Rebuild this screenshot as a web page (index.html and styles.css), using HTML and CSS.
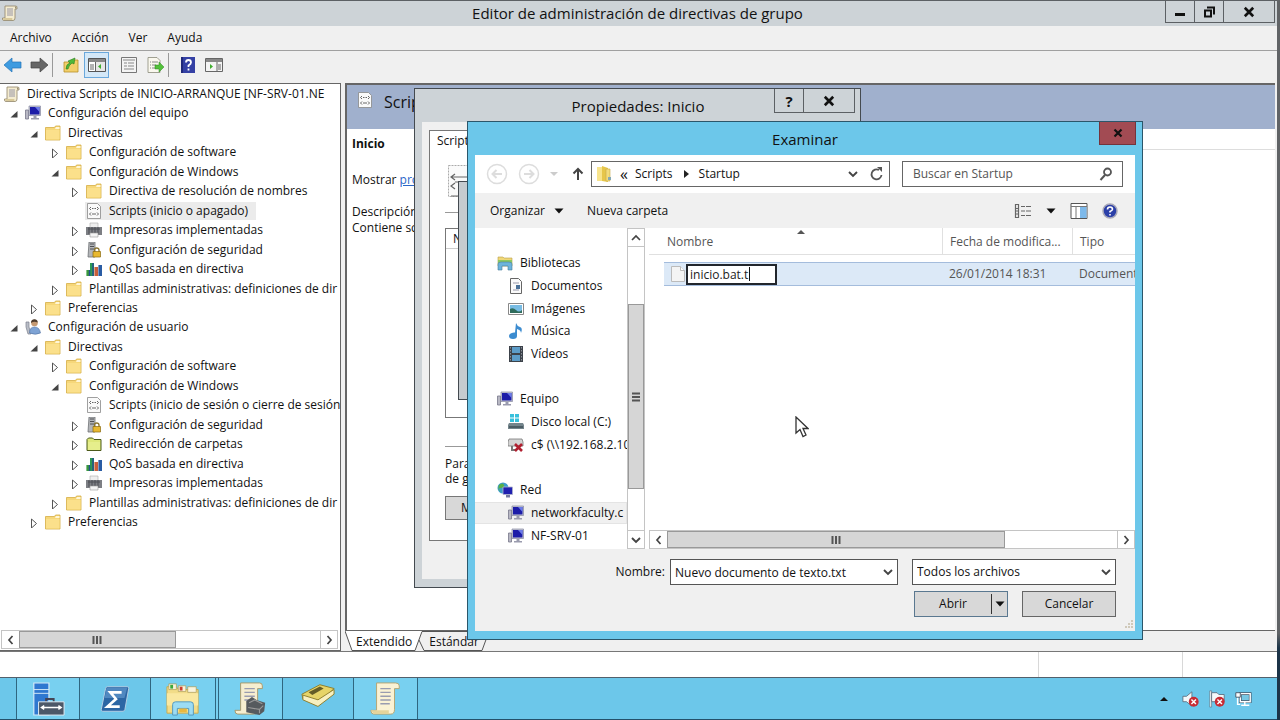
FILE: index.html
```
<!DOCTYPE html>
<html lang="es">
<head>
<meta http-equiv="content-type" content="text/html; charset=utf-8"/>
<title>Editor de administración de directivas de grupo</title>
<link rel="stylesheet" href="styles.css">
</head>

<body>

<!-- icon sprites -->
<svg class="sprites" aria-hidden="true">
	<symbol id="scroll" viewBox="0 0 16 16">
		<path d="M3 1h10.500q2 0 1.500 2v1h-2v9q0 2.500-2 2.500H2q-1.500 0-1.500-1.500v-1H3z" fill="#f4ecd0" stroke="#8f8468" stroke-width=".8"/>
		<path d="M13 1.300q1.800 0 1.500 2.200h-1.500z" fill="#9a8f72"/>
		<path d="M5 4h6M5 6h6M5 8h6M5 10h6" stroke="#8c8ca0" stroke-width=".9"/>
		<path d="M.8 13h9.500v2H2z" fill="#d8c99a"/>
	</symbol>
	<symbol id="folder" viewBox="0 0 16 16">
		<path d="M.5 2.500h9l1-1.500h4.500v14H.5z" fill="#f6d779" stroke="#d5ad45" stroke-width=".8"/>
		<path d="M11 2h3.500v2H10z" fill="#fff6d8"/>
		<path d="M1 5h13.500v9.500H1z" fill="#fbe08b"/>
	</symbol>
	<symbol id="greenfolder" viewBox="0 0 16 16">
		<path d="M1 3.500 2.500 2h4L8 3.500h7v11H1z" fill="#dfe87a" stroke="#4b5a1a"/>
		<path d="M2 6h12v8H2z" fill="#e6ee8c"/>
	</symbol>
	<symbol id="computer" viewBox="0 0 16 16">
		<path d="M.5 5h3v9h-3z" fill="#b8b8c4" stroke="#77778a" stroke-width=".8"/>
		<path d="M4 1h11.500v9.500H4z" fill="#c6c8d4" stroke="#8588a0" stroke-width=".7"/>
		<path d="M5 2h9.500v7.500H5z" fill="#1c1ca8"/>
		<path d="M10 2h4.500v5z" fill="#6c7be8"/>
		<path d="M8.500 11h3v2h2.500v1.500H6V13h2.500z" fill="#9a9bae"/>
	</symbol>
	<symbol id="user" viewBox="0 0 16 16">
		<path d="M1 3h3v5l2 7H3L1 8z" fill="#b9bdc6" stroke="#7b808c" stroke-width=".7"/>
		<circle cx="9.500" cy="4" r="3.300" fill="#c69a72"/>
		<path d="M6 4q0-4 4-3.700Q13 1 12.500 3.500 9 2 6 4z" fill="#4c3b2c"/>
		<path d="M4.500 14q0-6 5-6t6 6q-5 2.500-11 0z" fill="#7ea3d4" stroke="#4e6f9f" stroke-width=".6"/>
	</symbol>
	<symbol id="script" viewBox="0 0 16 16">
		<path d="M1.500.5h10L14.500 3.500v12h-13z" fill="#fafafa" stroke="#888" stroke-width=".8"/>
		<path d="M5 4 3.500 5.500 5 7M11 4l1.500 1.500L11 7M6 5.500h1.500M8.500 5.500H10M5 9.500 3.500 11 5 12.500M11 9.500l1.500 1.500-1.500 1.500M6 11h4" fill="none" stroke="#555" stroke-width=".9"/>
	</symbol>
	<symbol id="printer" viewBox="0 0 16 16">
		<path d="M4 1h8v5H4z" fill="#eee" stroke="#aaa" stroke-width=".6"/>
		<path d="M0 5h16v8H0z" fill="#7d7f84"/>
		<path d="M2 7h12M3 5v7M6 5v7M9 5v7M12 5v7" stroke="#4c4e54"/>
		<path d="M4 11h8v4H4z" fill="#f4f4f4" stroke="#999" stroke-width=".6"/>
	</symbol>
	<symbol id="security" viewBox="0 0 16 16">
		<path d="M3 0h6v15H2z" fill="#b3b5b8" stroke="#6f7175" stroke-width=".8"/>
		<path d="M4 2h4M4 4.500h4M4 7h4" stroke="#4e5054"/>
		<path d="M8.500 10V8q0-2 2.200-2T13 8v2" fill="none" stroke="#8a7430" stroke-width="1.300"/>
		<path d="M7 9.500h7.500V15H7z" fill="#e8b830" stroke="#8a6a10" stroke-width=".7"/>
	</symbol>
	<symbol id="bars" viewBox="0 0 16 16">
		<path d="M0 9h4v6H0z" fill="#3a9a3c"/><path d="M4 2h4v13H4z" fill="#2c9a54"/>
		<path d="M8 6h4v9H8z" fill="#c8603c"/><path d="M12 4h4v11h-4z" fill="#2a5ca4"/>
		<path d="M.5 9v6M12.500 4v11M8.500 6v9" stroke="#fff" stroke-opacity=".4"/><path d="M3.500 9v6M7 2v13" stroke="#24508c" stroke-width="1.500"/>
	</symbol>
	<symbol id="closed" viewBox="0 0 10 10"><path d="M2.500 1 7.500 5.500 2.500 10z" fill="#fff" stroke="#555"/></symbol>
	<symbol id="open" viewBox="0 0 10 10"><path d="M8.500 2v6.500H1.500z" fill="#444"/></symbol>
	<symbol id="left" viewBox="0 0 10 10"><path d="M6.500 1 3 5l3.500 4" fill="none" stroke="#444" stroke-width="1.700"/></symbol>
	<symbol id="right" viewBox="0 0 10 10"><path d="M3.500 1 7 5 3.500 9" fill="none" stroke="#444" stroke-width="1.700"/></symbol>
	<symbol id="up" viewBox="0 0 10 10"><path d="M1 7l4-4 4 4" fill="none" stroke="#444" stroke-width="1.700"/></symbol>
	<symbol id="down" viewBox="0 0 10 10"><path d="M1 3l4 4 4-4" fill="none" stroke="#444" stroke-width="1.900"/></symbol>
	<symbol id="caret" viewBox="0 0 10 10"><path d="M.5 2.500h9L5 7.500z" fill="#111"/></symbol>
	<symbol id="cross" viewBox="0 0 10 10"><path d="M1.500 1.500l7 7M8.500 1.500l-7 7" stroke="#111" stroke-width="2.200"/></symbol>
	<symbol id="grip" viewBox="0 0 10 10"><path d="M1.500 1v8M5 1v8M8.500 1v8" stroke="#555" stroke-width="2"/></symbol>
</svg>

<div class="main_window">

<header class="titlebar">
	<svg class="icon"><use href="#scroll"/></svg>
	<h1>Editor de administración de directivas de grupo</h1>
	<div class="window_buttons">
		<button aria-label="Minimizar"><svg viewBox="0 0 12 12"><path d="M1 7h10v3H1z" fill="#111"/></svg></button>
		<button aria-label="Restaurar"><svg viewBox="0 0 12 12"><path d="M4 1.500h7v7M2 4.500h6v6H2z" fill="none" stroke="#111" stroke-width="2"/></svg></button>
		<button class="wide" aria-label="Cerrar"><svg viewBox="0 0 10 10"><use href="#cross"/></svg></button>
	</div>
</header>

<nav class="menubar">
	<button>Archivo</button>
	<button>Acción</button>
	<button>Ver</button>
	<button>Ayuda</button>
</nav>

<div class="toolbar">
	<button aria-label="Atrás"><svg viewBox="0 0 18 16"><path d="M0 8 8 1v4h9v6H8v4z" fill="#3e9be0" stroke="#2474b8" stroke-width=".7"/></svg></button>
	<button aria-label="Adelante"><svg viewBox="0 0 18 16"><path d="M18 8l-8-7v4H1v6h9v4z" fill="#666" stroke="#444" stroke-width=".7"/></svg></button>
	<span class="divider"></span>
	<button aria-label="Subir un nivel"><svg viewBox="0 0 18 16"><path d="M2 5h7l1-2h6v12H2z" fill="#f2cf6a" stroke="#b88f28" stroke-width=".8"/><path d="M4 12q0-5 4-6L6 4l7-3-1 6-2-1q-3 2-4 6z" fill="#4fb83a" stroke="#2b7f1c" stroke-width=".6"/></svg></button>
	<button class="pressed" aria-label="Mostrar árbol de consola"><svg viewBox="0 0 18 16"><path d="M.5 1.500h17v13H.5z" fill="#fff" stroke="#555"/><path d="M1 2h16v3H1z" fill="#888"/><path d="M2 8h4M2 10h4M2 12h4M7.500 5v9" stroke="#666"/><path d="M8 5h9v9H8z" fill="#e6e6e6"/><path d="M13 7v5L10 9.500z" fill="#3fae2e"/></svg></button>
	<button class="gap" aria-label="Propiedades"><svg viewBox="0 0 18 16"><path d="M1.500.5h15v15h-15z" fill="#f4f4f4" stroke="#777"/><path d="M3 3h12M4 6h3M8 6h6M4 9h3M8 9h6M4 12h10" stroke="#888"/></svg></button>
	<button aria-label="Exportar lista"><svg viewBox="0 0 18 16"><path d="M2 .5h9l3 3v12H2z" fill="#faf8ee" stroke="#8a8a7a" stroke-width=".8"/><path d="M4 5h1M4 8h1M4 11h1M6 5h6M6 8h4M6 11h4" stroke="#888"/><path d="M9 8h4V5l5 5-5 5v-3H9z" fill="#52c03a" stroke="#2f8a1e" stroke-width=".5"/></svg></button>
	<span class="divider near"></span>
	<button aria-label="Ayuda"><svg viewBox="0 0 18 16"><path d="M2 0h14v16H2z" fill="#3440a4"/><path d="M2 0h2v16H2z" fill="#20297a"/><path d="M7 5.500Q7 3 9.500 3T12 5.500Q12 7 9.500 8.500V10M9.500 11.500v2" fill="none" stroke="#fff" stroke-width="1.800"/></svg></button>
	<button aria-label="Mostrar panel de acciones"><svg viewBox="0 0 18 16"><path d="M.5 1.500h17v13H.5z" fill="#f4f4f4" stroke="#666"/><path d="M1 2h16v3H1z" fill="#888"/><path d="M12 5v9M13 8h3M13 10h3M13 12h3" stroke="#666"/><path d="M5 7v5l3-2.500z" fill="#3fae2e"/></svg></button>
</div>

<main class="console">

<section class="tree_pane">
	<ul class="tree">
		<li><svg class="icon"><use href="#scroll"/></svg><span>Directiva Scripts de INICIO-ARRANQUE [NF-SRV-01.NE</span></li>
		<li class="level1"><svg class="arrow"><use href="#open"/></svg><svg class="icon"><use href="#computer"/></svg><span>Configuración del equipo</span></li>
		<li class="level2"><svg class="arrow"><use href="#open"/></svg><svg class="icon"><use href="#folder"/></svg><span>Directivas</span></li>
		<li class="level3"><svg class="arrow"><use href="#closed"/></svg><svg class="icon"><use href="#folder"/></svg><span>Configuración de software</span></li>
		<li class="level3"><svg class="arrow"><use href="#open"/></svg><svg class="icon"><use href="#folder"/></svg><span>Configuración de Windows</span></li>
		<li class="level4"><svg class="arrow"><use href="#closed"/></svg><svg class="icon"><use href="#folder"/></svg><span>Directiva de resolución de nombres</span></li>
		<li class="level4"><svg class="arrow"></svg><div class="selected"><svg class="icon"><use href="#script"/></svg><span>Scripts (inicio o apagado)</span></div></li>
		<li class="level4"><svg class="arrow"><use href="#closed"/></svg><svg class="icon"><use href="#printer"/></svg><span>Impresoras implementadas</span></li>
		<li class="level4"><svg class="arrow"><use href="#closed"/></svg><svg class="icon"><use href="#security"/></svg><span>Configuración de seguridad</span></li>
		<li class="level4"><svg class="arrow"><use href="#closed"/></svg><svg class="icon"><use href="#bars"/></svg><span>QoS basada en directiva</span></li>
		<li class="level3"><svg class="arrow"><use href="#closed"/></svg><svg class="icon"><use href="#folder"/></svg><span>Plantillas administrativas: definiciones de dir</span></li>
		<li class="level2"><svg class="arrow"><use href="#closed"/></svg><svg class="icon"><use href="#folder"/></svg><span>Preferencias</span></li>
		<li class="level1"><svg class="arrow"><use href="#open"/></svg><svg class="icon"><use href="#user"/></svg><span>Configuración de usuario</span></li>
		<li class="level2"><svg class="arrow"><use href="#open"/></svg><svg class="icon"><use href="#folder"/></svg><span>Directivas</span></li>
		<li class="level3"><svg class="arrow"><use href="#closed"/></svg><svg class="icon"><use href="#folder"/></svg><span>Configuración de software</span></li>
		<li class="level3"><svg class="arrow"><use href="#open"/></svg><svg class="icon"><use href="#folder"/></svg><span>Configuración de Windows</span></li>
		<li class="level4"><svg class="arrow"></svg><svg class="icon"><use href="#script"/></svg><span>Scripts (inicio de sesión o cierre de sesión</span></li>
		<li class="level4"><svg class="arrow"><use href="#closed"/></svg><svg class="icon"><use href="#security"/></svg><span>Configuración de seguridad</span></li>
		<li class="level4"><svg class="arrow"><use href="#closed"/></svg><svg class="icon"><use href="#greenfolder"/></svg><span>Redirección de carpetas</span></li>
		<li class="level4"><svg class="arrow"><use href="#closed"/></svg><svg class="icon"><use href="#bars"/></svg><span>QoS basada en directiva</span></li>
		<li class="level4"><svg class="arrow"><use href="#closed"/></svg><svg class="icon"><use href="#printer"/></svg><span>Impresoras implementadas</span></li>
		<li class="level3"><svg class="arrow"><use href="#closed"/></svg><svg class="icon"><use href="#folder"/></svg><span>Plantillas administrativas: definiciones de dir</span></li>
		<li class="level2"><svg class="arrow"><use href="#closed"/></svg><svg class="icon"><use href="#folder"/></svg><span>Preferencias</span></li>
	</ul>
	<div class="hscroll">
		<button aria-label="Izquierda"><svg><use href="#left"/></svg></button>
		<div class="track"><div class="thumb tree_thumb"><svg><use href="#grip"/></svg></div></div>
		<button aria-label="Derecha"><svg><use href="#right"/></svg></button>
	</div>
</section>

<section class="detail_pane">
	<div class="detail">
		<div class="detail_header"><svg class="icon"><use href="#script"/></svg><h2>Scripts</h2></div>
		<div class="detail_rule"></div>
		<div class="detail_text">
			<p><b>Inicio</b></p>
			<p>Mostrar <a href="#">propiedades</a></p>
			<p>Descripción:<br>Contiene scripts</p>
		</div>
	</div>
	<div class="tabs">
		<svg class="left_edge" viewBox="0 0 8 20"><path d="M0 0h8v19H7z" fill="#fff"/><path d="M0 0l7 19.500h1" fill="none" stroke="#555"/></svg>
		<button class="tab active">Extendido</button>
		<svg class="right_edge" viewBox="0 0 12 20"><path d="M0 0h8L1 19H0z" fill="#fff"/><path d="M0 19.500h1L8 .5h4M5 9l5 10.500h2" fill="none" stroke="#555"/></svg>
		<button class="tab">Estándar</button>
		<svg class="left_edge" viewBox="0 0 8 20"><path d="M0 19.500h1L8 .5H0" fill="none" stroke="#555"/></svg>
	</div>
</section>

</main>

<footer class="statusbar"><span></span><span></span><span></span></footer>

</div>

<!-- script properties -->
<section class="window properties">
	<header>
		<h2>Propiedades: Inicio</h2>
		<div class="window_buttons">
			<button aria-label="Ayuda"><b>?</b></button>
			<button class="wide" aria-label="Cerrar"><svg><use href="#cross"/></svg></button>
		</div>
	</header>
	<div class="properties_client">
		<div class="properties_tab">
			<p>Scripts</p>
			<svg class="big_script" viewBox="0 0 32 32"><path d="M.5.5h31v31H.5z" fill="#fafafa" stroke="#aaa" stroke-dasharray="2 1"/><path d="M7 9l-4 3 4 3M4 12h24M7 18l-4 3 4 3M7 17h22M3 31h28" fill="none" stroke="#666" stroke-width="1.200"/></svg>
			<hr>
			<div class="script_list"><span>N</span></div>
			<hr>
			<p class="hint">Para<br>de g</p>
			<button>M</button>
		</div>
	</div>
</section>

<section class="window add_script"></section>

<!-- file browser -->
<section class="window browse">
	<header>
		<h2>Examinar</h2>
		<button class="close" aria-label="Cerrar"><svg><use href="#cross"/></svg></button>
	</header>
	<div class="browse_client">

	<div class="nav_row">
		<button aria-label="Atrás"><svg class="round" viewBox="0 0 22 22"><circle cx="11" cy="11" r="9.500" fill="none" stroke="#ddd" stroke-width="1.500"/><path d="M16 11H7M10.500 7l-4 4 4 4" fill="none" stroke="#ddd" stroke-width="2"/></svg></button>
		<button aria-label="Adelante"><svg class="round" viewBox="0 0 22 22"><circle cx="11" cy="11" r="9.500" fill="none" stroke="#ddd" stroke-width="1.500"/><path d="M6 11h9M11.500 7l4 4-4 4" fill="none" stroke="#ddd" stroke-width="2"/></svg></button>
		<svg class="recent" viewBox="0 0 10 10"><path d="M1 3h8L5 7z" fill="#ccc"/></svg>
		<button aria-label="Subir"><svg class="up" viewBox="0 0 12 14"><path d="M6 13V2M1.500 6.500 6 2l4.500 4.500" fill="none" stroke="#444" stroke-width="2"/></svg></button>
		<div class="address">
			<svg class="icon" viewBox="0 0 16 16"><path d="M1 1h6v14H1z" fill="#f8e48c"/><path d="M6 0l6 2v14l-6-1z" fill="#e6c64a"/><path d="M10 3h4v12h-4z" fill="#f2dc7c" stroke="#c6a848" stroke-width=".6"/><path d="M12 11h3v3h-3z" fill="#84a8b4"/></svg>
			<span class="crumbs">«</span>
			<a href="#">Scripts</a>
			<svg class="crumb_arrow" viewBox="0 0 10 10"><path d="M3 1l5 4-5 4z" fill="#222"/></svg>
			<a href="#">Startup</a>
			<button class="push" aria-label="Ubicaciones anteriores"><svg><use href="#down"/></svg></button>
			<button aria-label="Actualizar"><svg class="refresh" viewBox="0 0 14 14"><path d="M11.500 8A5 5 0 1 1 9 3" fill="none" stroke="#555" stroke-width="1.800"/><path d="M7 0h5v5z" fill="#555"/></svg></button>
		</div>
		<label class="search">
			<input type="text" placeholder="Buscar en Startup" aria-label="Buscar en Startup">
			<svg viewBox="0 0 14 14"><circle cx="8.500" cy="5" r="3.500" fill="none" stroke="#555" stroke-width="1.800"/><path d="M6 8l-4.500 5" stroke="#555" stroke-width="2"/></svg>
		</label>
	</div>

	<div class="command_row">
		<button>Organizar <svg><use href="#caret"/></svg></button>
		<button>Nueva carpeta</button>
		<button class="push" aria-label="Cambiar vista"><svg class="view" viewBox="0 0 18 16"><path d="M1.500 1.500h3v13h-3zM1 5.500h4M1 8h4M1 11h4M7 3.500h4M12 3.500h5M7 8h4M12 8h5M7 12.500h4M12 12.500h5" fill="none" stroke="#666" stroke-width="1.200"/></svg></button>
		<button aria-label="Más opciones"><svg><use href="#caret"/></svg></button>
		<button aria-label="Panel de vista previa"><svg class="view" viewBox="0 0 18 16"><path d="M1 .5h16v15H1z" fill="#fff" stroke="#555"/><path d="M1 3.500h16M6 4v11" stroke="#777"/><path d="M10 4h6.500v11H10z" fill="#7db9ea"/></svg></button>
		<button aria-label="Ayuda"><svg class="help" viewBox="0 0 16 16"><circle cx="8" cy="8" r="7" fill="#2b3fa8" stroke="#a8a8b8" stroke-width="1.500"/><path d="M5.500 6.500Q5.500 4 8 4t2.500 2.300Q10.500 7.500 8 8.500v1M8 11v1.500" fill="none" stroke="#fff" stroke-width="1.600"/></svg></button>
	</div>

	<div class="browse_body">
		<ul class="places">
			<li><svg class="icon" viewBox="0 0 16 16"><path d="M1 2h5l1 1h8v8H1z" fill="#f0d878" stroke="#b8a048" stroke-width=".6"/><path d="M1 5h14v3H1z" fill="#8cc860"/><path d="M1 15V9q0-2 3-2h8q3 0 3 2v6h-4v-4H5v4z" fill="#6cb4dc" stroke="#467c9c" stroke-width=".6"/></svg>Bibliotecas</li>
			<li class="child"><svg class="icon" viewBox="0 0 16 16"><path d="M2.500 .5h8l3 3v12h-11z" fill="#fafafa" stroke="#666"/><path d="M5 5h6M5 12h6" stroke="#99a"/><path d="M8 7h4v4H8z" fill="#4a7098"/></svg>Documentos</li>
			<li class="child"><svg class="icon" viewBox="0 0 16 16"><path d="M.5 2.500h15v11H.5z" fill="#fff" stroke="#888"/><path d="M2 4h12v8H2z" fill="#78bce4"/><path d="M2 8q3-2 6 1t6 0v3H2z" fill="#2f6c5c"/></svg>Imágenes</li>
			<li class="child"><svg class="icon" viewBox="0 0 16 16"><path d="M8 0q1 3 4 4t1 6q0-3-4-4v7q0 3-4 3t-4-3 5-3.500h1z" fill="#3c8cd0"/></svg>Música</li>
			<li class="child"><svg class="icon" viewBox="0 0 16 16"><path d="M1 0h14v16H1z" fill="#3c424a"/><path d="M4 1h8v6H4zM4 9h8v6H4z" fill="#5c9cc8"/><path d="M2.500 1v14M13.500 1v14" stroke="#8a9098" stroke-dasharray="1.500 1.500"/></svg>Vídeos</li>
			<li></li>
			<li><svg class="icon"><use href="#computer"/></svg>Equipo</li>
			<li class="child"><svg class="icon" viewBox="0 0 16 16"><path d="M2 0h4v3.500H2zM7 0h4v3.500H7zM2 4.500h4V8H2zM7 4.500h4V8H7z" fill="#38c0dc"/><path d="M1 9h14l1 2v4H0v-4z" fill="#74858c"/><path d="M1 12h14v2H1z" fill="#4c5c64"/></svg>Disco local (C:)</li>
			<li class="child"><svg class="icon" viewBox="0 0 16 16"><path d="M1 2h13l1 3v4H0V5z" fill="#d4d4d4" stroke="#777" stroke-width=".8"/><path d="M4 9v4h4" fill="none" stroke="#777" stroke-width="2"/><path d="M7 7l7 7M14 7l-7 7" stroke="#b02030" stroke-width="2.600"/></svg>c$ (\\192.168.2.10</li>
			<li></li>
			<li><svg class="icon" viewBox="0 0 16 16"><circle cx="6" cy="6" r="5.500" fill="#3c9ccc"/><path d="M2 3q4-3 5 0t-3 3 0 4Q0 8 2 3z" fill="#58b048"/><path d="M6 5h9.500v7.500H6z" fill="#2020b0" stroke="#b0b4cc" stroke-width=".8"/><path d="M9 13h4v2.500H9z" fill="#7478a0"/></svg>Red</li>
			<li class="child current"><svg class="icon"><use href="#computer"/></svg>networkfaculty.c</li>
			<li class="child"><svg class="icon"><use href="#computer"/></svg>NF-SRV-01</li>
		</ul>
		<div class="vscroll">
			<button aria-label="Arriba"><svg><use href="#up"/></svg></button>
			<div class="track"><div class="thumb"><svg viewBox="0 0 10 10"><path d="M1 1.500h8M1 5h8M1 8.500h8" stroke="#555" stroke-width="2"/></svg></div></div>
			<button aria-label="Abajo"><svg><use href="#down"/></svg></button>
		</div>
		<div class="files">
			<table>
				<colgroup><col class="col_pad"><col class="col_name"><col class="col_date"><col class="col_type"></colgroup>
				<thead><tr><th></th><th class="sorted">Nombre<svg viewBox="0 0 10 6"><path d="M0 6l5-5 5 5z" fill="#555"/></svg></th><th>Fecha de modifica...</th><th>Tipo</th></tr></thead>
				<tbody><tr>
					<td></td>
					<td><div class="file_name"><svg class="icon" viewBox="0 0 16 16"><path d="M1.500.5h9l4 4v11h-13z" fill="#f4f4f4" stroke="#bbb"/><path d="M10.500.5v4h4" fill="#fff" stroke="#bbb"/></svg><input type="text" value="inicio.bat.t" aria-label="Nombre del archivo"><i class="text_cursor"></i></div></td>
					<td>26/01/2014 18:31</td>
					<td>Documento</td>
				</tr></tbody>
			</table>
			<div class="hscroll">
				<button aria-label="Izquierda"><svg><use href="#left"/></svg></button>
				<div class="track"><div class="thumb files_thumb"><svg><use href="#grip"/></svg></div></div>
				<button aria-label="Derecha"><svg><use href="#right"/></svg></button>
			</div>
		</div>
	</div>

	<div class="browse_footer">
		<div class="footer_row">
			<label for="file_name">Nombre:</label>
			<div class="combo"><input type="text" id="file_name" value="Nuevo documento de texto.txt"><svg><use href="#down"/></svg></div>
			<div class="combo filter"><select aria-label="Tipo de archivo"><option>Todos los archivos</option></select><svg><use href="#down"/></svg></div>
		</div>
		<div class="footer_row">
			<div class="split_button"><button>Abrir</button><button class="split_arrow" aria-label="Más opciones de apertura"><svg><use href="#caret"/></svg></button></div>
			<button class="cancel">Cancelar</button>
		</div>
		<svg class="resize" viewBox="0 0 10 10"><path d="M8 1h2M5 4h2M8 4h2M2 7h2M5 7h2M8 7h2" stroke="#c4bca8" stroke-width="1.500"/></svg>
	</div>

	</div>
</section>

<svg class="mouse" viewBox="0 0 14 22"><path d="M1 1v16l4-3.500 3 7 3-1.500-3-6.500h5z" fill="#fff" stroke="#333" stroke-width="1.300"/></svg>

<nav class="taskbar">
	<button class="task running" aria-label="Administrador del servidor"><svg viewBox="0 0 36 36"><path d="M3 1h16v34H3z" fill="#2f78d0" stroke="#d8ecf8" stroke-width="1.200"/><path d="M3 8h16M3 12h16" stroke="#d8ecf8"/><path d="M16 21v-3h8v3" fill="none" stroke="#445" stroke-width="2"/><path d="M8 21h27v14H8z" fill="#4c5868" stroke="#e4eef4"/><path d="M12 27h19M14 25l-3 2 3 2M29 25l3 2-3 2" fill="none" stroke="#fff" stroke-width="1.500"/></svg></button>
	<button class="task medium" aria-label="PowerShell"><svg viewBox="0 0 36 36"><path d="M10 5h21q2 0 1.500 2l-4 22q-.5 2-2 2H5q-2 0-1.500-2L8 7q.5-2 2-2z" fill="#2c66a4" stroke="#b8d0e4"/><path d="M9 6h22l-3 11H7z" fill="#5088c0"/><path d="M25 11H13l6 7-9 8h13" fill="none" stroke="#fff" stroke-width="2.800"/></svg></button>
	<button class="task stacked" aria-label="Explorador de archivos"><svg viewBox="0 0 36 36"><path d="M1 5h10l2 3h21v25H1z" fill="#f2dc88" stroke="#c8aa50"/><path d="M3 2h8v6H3zM13 4h8v6h-8zM23 5h9v6h-9z" fill="#faf4dc" stroke="#a89850" stroke-width=".7"/><path d="M6 3v4" stroke="#3ca83c" stroke-width="3"/><path d="M16 5v4" stroke="#c83c2c" stroke-width="3"/><path d="M1 12h33v13H1z" fill="#fae8a0"/><path d="M7 35V24q0-3 3-3h16q3 0 3 3v11h-5v-7H12v7z" fill="#9cdcf4" stroke="#5498bc"/><path d="M14 28h8v4h-8z" fill="#e8b840"/></svg></button>
	<button class="task running" aria-label="Administración de directivas de grupo"><svg viewBox="0 0 36 36"><path d="M7 1h20q3 0 3 3v3h-5v22q0 5-4 5H4q-3 0-3-4h6z" fill="#f6eed0" stroke="#a89868"/><path d="M11 7h11M11 11h11M11 15h11M11 19h10" stroke="#999cb0" stroke-width="1.500"/><path d="M13 20l6-4 5 3 9 3-1 9-5 4-14-3z" fill="#565a5e"/><path d="M16 22l6-3 8 4M15 27l12 2 4-4M27 29v4" fill="none" stroke="#999" stroke-width="1.200"/></svg></button>
	<button class="task medium book" aria-label="Libro"><svg viewBox="0 0 36 36"><path d="M1 15 20 5l15 4-17 17L2 20z" fill="#e6d468" stroke="#8c7c28"/><path d="M2 16l16 5 17-11v5L18 28 2 21z" fill="#f8f0c0" stroke="#8c7c28"/><path d="M8 13l12-6 4 2-12 7z" fill="#635c28"/></svg></button>
	<button class="task running" aria-label="Editor de directivas"><svg viewBox="0 0 36 36"><path d="M8 1h20q4 0 4 3v3h-5v22q0 5-4 5H5q-3 0-3-4h6z" fill="#faf2d4" stroke="#b4a470"/><path d="M12 7h11M12 11h11M12 15h11M12 19h11M12 23h10" stroke="#999cb0" stroke-width="1.500"/><path d="M2 30h19v4H5z" fill="#e4d49c"/></svg></button>
	<div class="tray">
		<svg class="tray_arrow" viewBox="0 0 10 6"><path d="M0 6l5-5 5 5z" fill="#111"/></svg>
		<svg viewBox="0 0 20 20"><path d="M1 7h4l6-5v16l-6-5H1z" fill="#f4f8fa" stroke="#567" stroke-width=".9"/><circle cx="13" cy="13" r="5.500" fill="#c82c34"/><path d="M10.500 10.500l5 5M15.500 10.500l-5 5" stroke="#fff" stroke-width="1.600"/></svg>
		<svg viewBox="0 0 20 20"><path d="M2 1h2v18H2z" fill="#fff" stroke="#567" stroke-width=".7"/><path d="M4 3h6l2 2h6v8H4z" fill="#f4f8fa" stroke="#567" stroke-width=".9"/><circle cx="13" cy="13" r="5.500" fill="#c82c34"/><path d="M10.500 10.500l5 5M15.500 10.500l-5 5" stroke="#fff" stroke-width="1.600"/></svg>
		<svg viewBox="0 0 20 20"><path d="M7 4h11v9H7z" fill="#78c8e4" stroke="#456" stroke-width="3"/><path d="M7 4h11v9H7zM12 13v4M8 17h9M4 8v8h3" fill="none" stroke="#fff" stroke-width="1.600"/><path d="M2 3h5v5H2z" fill="#fff" stroke="#456"/></svg>
	</div>
</nav>

</body>
</html>
```
FILE: styles.css
```
* {
box-sizing: border-box;
}

body {
display: flex;
flex-direction: column;
height: 100vh;
margin: 0;
padding-right: 3px;
overflow: hidden;
font: 12px/16px "Open Sans", "Noto Sans", sans-serif;
color: #111111;
background: linear-gradient(#606366 88%, #1c3448 90%);
}

.sprites {
position: absolute;
width: 0;
height: 0;
}

h1, h2, p, ul {
margin: 0;
padding: 0;
font-weight: normal;
}

button, input, select {
margin: 0;
padding: 0;
border: 0;
border-radius: 0;
background: none;
font: inherit;
color: inherit;
}

button {
display: flex;
align-items: center;
justify-content: center;
}

svg {
display: block;
flex: none;
width: 10px;
height: 10px;
}

.icon {
width: 16px;
height: 16px;
}


/* main window */


.main_window {
flex: 1;
display: flex;
flex-direction: column;
min-height: 0;
background-color: #f0f0f0;
}

.titlebar {
display: flex;
align-items: center;
height: 26px;
padding: 0 2px 1px;
border-top: 1px solid #5c6064;
background-color: #cdd3d7;
}

.titlebar h1 {
flex: 1;
padding-left: 92px;
text-align: center;
font-size: 15px;
}

.window_buttons {
display: flex;
align-self: flex-start;
border: 1px solid #5c6064;
border-top: 0;
}

.window_buttons button {
width: 29px;
height: 21px;
border-right: 1px solid #5c6064;
}

.window_buttons button.wide {
width: 50px;
border-right: 0;
}

.window_buttons svg {
width: 12px;
height: 12px;
}

.menubar {
display: flex;
gap: 20px;
height: 25px;
padding-left: 10px;
border-bottom: 1px solid #a0a0a0;
}

.toolbar {
display: flex;
align-items: center;
gap: 1px;
height: 32px;
padding-bottom: 5px;
}

.toolbar button {
width: 25px;
height: 26px;
}

.toolbar svg {
width: 18px;
height: 16px;
}

.toolbar .divider {
width: 1px;
height: 24px;
margin: 0 4px 0 0;
background-color: #999999;
}

.toolbar .divider.near {
margin-right: 5px;
}

.toolbar .pressed {
border: 1px solid #6aa8dc;
background-color: #d4e8f8;
}

.toolbar .gap {
margin-left: 6px;
}

.console {
flex: 1;
display: flex;
gap: 4px;
min-height: 0;
border-bottom: 1px solid #777777;
}


/* policy tree */


.tree_pane {
display: flex;
flex-direction: column;
justify-content: space-between;
width: 341px;
border: 1px solid #666666;
border-left: 0;
padding-bottom: 1px;
background-color: #ffffff;
overflow: hidden;
}

/* rows share the list height evenly */
.tree {
display: grid;
grid-auto-rows: 1fr;
height: 448px;
list-style: none;
overflow: hidden;
}

.tree li, .selected {
display: flex;
align-items: center;
gap: 7px;
white-space: nowrap;
}

.tree li {
padding-left: 4px;
}

.tree .arrow {
margin: 2px -1px 0 0;
}

.tree .level1 { padding-left: 9px; }
.tree .level2 { padding-left: 29px; }
.tree .level3 { padding-left: 50px; }
.tree .level4 { padding-left: 70px; }

.selected {
margin-left: -1px;
padding: 1px 8px 1px 1px;
background-color: #ebebeb;
}


/* scrollbars */


.hscroll, .vscroll {
display: flex;
background-color: #ffffff;
border: 1px solid #c4c4c4;
}

.hscroll {
height: 19px;
}

.vscroll {
flex-direction: column;
width: 18px;
}

.track {
flex: 1;
display: flex;
}

.thumb {
display: flex;
align-items: center;
justify-content: center;
border: 1px solid #999999;
background-color: #d6d6d6;
}

.hscroll button {
width: 17px;
}

.vscroll button {
height: 18px;
border-bottom: 1px solid #c4c4c4;
}

.hscroll button:last-child {
border-left: 1px solid #c4c4c4;
}

.vscroll button:last-child {
border-top: 1px solid #c4c4c4;
border-bottom: 0;
}

.tree_pane .hscroll {
margin: 0 2px 0 1px;
}

.tree_thumb {
width: 52%;
}

.files_thumb {
width: 75%;
}

.vscroll .thumb {
width: 100%;
height: 185px;
margin-top: 57px;
}


/* detail pane */


.detail_pane {
flex: 1;
display: flex;
flex-direction: column;
padding-right: 2px;
min-width: 0;
}

.detail {
flex: 1;
border: 2px solid #666666;
border-right: 0;
border-bottom-width: 1px;
background-color: #ffffff;
}

.detail_header {
display: flex;
align-items: flex-start;
gap: 11px;
height: 44px;
padding: 7px 10px;
background-color: #a0b0cd;
}

.detail_header h2 {
font-size: 16px;
line-height: 20px;
}

/* only runs under the right part of the pane */
.detail_rule {
height: 21px;
margin-left: 50%;
border-bottom: 1px solid #dddddd;
}

.detail_text {
display: flex;
flex-direction: column;
gap: 20px;
padding-left: 5px;
margin-top: -14px;
}

.detail_text p:last-child {
margin-top: -4px;
}

.detail_text a {
color: #2a66c8;
}

.tabs {
display: flex;
height: 20px;
}

.left_edge {
width: 8px;
height: 20px;
}

.right_edge {
width: 12px;
height: 20px;
}

.tab {
padding: 2px 2px 0 3px;
border-bottom: 1px solid #555555;
border-top: 1px solid #555555;
}

.tab.active {
background-color: #ffffff;
border-top-color: #ffffff;
}

.statusbar {
display: grid;
grid-template-columns: 1fr 144px 95px;
height: 25px;
background-color: #ffffff;
}

.statusbar span + span {
border-left: 1px solid #d8d8d8;
}


/* windows on top of the console */


.window {
position: absolute;
border: 1px solid #444a50;
}

.window header {
display: flex;
align-items: center;
}

.window h2 {
flex: 1;
text-align: center;
font-size: 15px;
line-height: 20px;
}

.properties {
left: 414px;
top: 88px;
width: 447px;
height: 500px;
padding: 0 7px 8px;
display: flex;
flex-direction: column;
background-color: #cdd3d7;
}

.properties header {
height: 33px;
}

.properties h2 {
padding-left: 80px;
}

.properties .window_buttons {
margin-right: -2px;
}

.properties .window_buttons button {
height: 23px;
}

.properties .window_buttons b {
font-size: 15px;
}

.properties_client {
flex: 1;
padding: 8px 7px 38px;
background-color: #f0f0f0;
}

.properties_tab {
height: 100%;
padding: 2px 15px;
border: 1px solid #777777;
background-color: #ffffff;
}

.properties_tab > p:first-child {
margin-left: -8px;
}

.big_script {
width: 32px;
height: 32px;
margin: 16px 0 0 3px;
}

.properties_tab hr {
margin: 15px 0;
border: 0;
border-top: 1px solid #999999;
}

.script_list {
height: 190px;
border: 1px solid #777777;
}

.script_list span {
display: block;
height: 20px;
padding: 2px 7px;
border-bottom: 1px solid #cccccc;
}

.properties_tab hr:nth-of-type(2) {
margin: 28px 0 9px;
}

.hint {
line-height: 15px;
}

.properties_tab > button {
justify-content: flex-start;
width: 120px;
height: 24px;
margin-top: 10px;
padding-left: 15px;
border: 1px solid #777777;
background-color: #d8d8d8;
}

.add_script {
left: 458px;
top: 181px;
width: 380px;
height: 219px;
background-color: #c6cbcf;
}

.browse {
left: 467px;
top: 121px;
width: 676px;
padding: 0 7px 8px;
border-color: #2b566a;
background-color: #6cc7ea;
}

.browse header {
height: 33px;
}

.browse h2 {
padding-left: 36px;
}

.browse .close {
align-self: flex-start;
width: 37px;
height: 23px;
margin-right: -1px;
border: 1px solid #74343c;
border-top: 0;
background-color: #a24b53;
}

.browse_client {
background-color: #ffffff;
}

.nav_row, .command_row {
display: flex;
align-items: center;
}

.nav_row {
height: 38px;
gap: 10px;
padding: 0 12px 0 11px;
}

.nav_row .round {
width: 22px;
height: 22px;
}

.nav_row .recent {
margin: 0 -1px;
}

.nav_row .up {
width: 12px;
height: 14px;
margin-left: 4px;
}

.address {
flex: 1;
display: flex;
align-items: center;
gap: 8px;
height: 26px;
margin-left: -3px;
padding: 0 5px 0 4px;
border: 1px solid #666666;
}

.address a {
color: inherit;
text-decoration: none;
}

.address .crumbs {
font-size: 16px;
margin: 0 -1px 0 0;
}

.address .refresh {
width: 14px;
height: 14px;
margin-left: 4px;
}

.push {
margin-left: auto;
}

.search {
display: flex;
align-items: center;
width: 221px;
height: 26px;
margin-left: 2px;
padding: 0 9px 0 10px;
border: 1px solid #666666;
}

.search input {
flex: 1;
min-width: 0;
}

.search input::placeholder {
color: #555555;
}

.search svg {
width: 14px;
height: 14px;
}

.command_row {
height: 35px;
gap: 14px;
padding: 0 17px 0 15px;
background-color: #f0f0f0;
}

.command_row button {
gap: 9px;
}

.command_row button + button:not(.push) {
margin-left: 9px;
}

.command_row .push ~ button:not(.push) {
margin-left: 0;
}

.command_row .view {
width: 18px;
height: 16px;
}

.command_row .help {
width: 16px;
height: 16px;
}

.browse_body {
display: flex;
height: 321px;
}

.places {
flex: none;
display: grid;
grid-auto-rows: 1fr;
width: 152px;
height: 295px;
margin-top: 24px;
list-style: none;
overflow: hidden;
}

.places li {
display: flex;
align-items: center;
gap: 7px;
padding-left: 22px;
white-space: nowrap;
overflow: hidden;
}

.places .child {
padding-left: 33px;
}

.places .current {
border: 1px solid #e4e4e4;
border-left: 0;
background-color: #f0f0f0;
}

.files {
flex: 1;
display: flex;
flex-direction: column;
justify-content: space-between;
min-width: 0;
margin-left: 4px;
overflow: hidden;
}

.files table {
width: 605px;
table-layout: fixed;
border-collapse: separate;
border-spacing: 0;
color: #555555;
}

.col_pad { width: 15px; }
.col_name { width: 278px; }
.col_date { width: 130px; }

.files th {
height: 27px;
padding: 2px 0 0 7px;
border-bottom: 1px solid #e0e0e0;
border-left: 1px solid #e0e0e0;
text-align: left;
font-weight: normal;
}

.files th:nth-child(-n+2) {
border-left: 0;
padding-left: 3px;
}

.sorted {
position: relative;
}

/* sort arrow sits on the top edge of the heading */
.sorted svg {
position: absolute;
left: 48%;
top: 1px;
width: 8px;
height: 5px;
}

.files td {
height: 31px;
padding: 0 0 0 7px;
border-top: 7px solid #ffffff;
white-space: nowrap;
}

.files td + td {
background-color: #dce9f7;
background-clip: padding-box;
box-shadow: inset 0 1px #a4bcdc, inset 0 -1px #a4bcdc;
}

.files td:nth-child(2) {
padding-left: 6px;
}

.file_name {
display: flex;
align-items: center;
}

.file_name input {
width: 91px;
height: 21px;
padding-left: 2px;
border: 2px solid #22262c;
background-color: #ffffff;
color: #222222;
}

.text_cursor {
width: 1px;
height: 14px;
margin-left: -28px;
background-color: #111111;
}

.browse_footer {
position: relative;
padding: 10px 19px 14px;
background-color: #f0f0f0;
}

.footer_row {
display: flex;
align-items: center;
justify-content: flex-end;
gap: 14px;
}

.footer_row + .footer_row {
margin-top: 6px;
}

.footer_row label {
margin-right: -9px;
}

.combo {
display: flex;
align-items: center;
width: 228px;
height: 26px;
padding-right: 4px;
border: 1px solid #555555;
background-color: #ffffff;
}

.combo input, .combo select {
flex: 1;
min-width: 0;
height: 100%;
padding-left: 4px;
appearance: none;
}

.filter {
width: 204px;
}

.split_button, .cancel {
width: 94px;
height: 26px;
border: 1px solid #666666;
background-color: #d8d8d8;
}

.split_button {
display: flex;
border-color: #5a7890;
}

.split_button button {
flex: 1;
}

.split_button .split_arrow {
flex: none;
width: 16px;
margin: 2px 0;
border-left: 1px solid #333333;
}

.resize {
position: absolute;
right: 2px;
bottom: 1px;
}

.mouse {
position: absolute;
left: 795px;
top: 416px;
width: 14px;
height: 22px;
}


/* taskbar */


.taskbar {
flex: none;
display: flex;
height: 43px;
padding-left: 16px;
border-top: 1px solid #52606c;
border-bottom: 1px solid #24506a;
background-color: #6cc7ea;
}

.task {
width: 64px;
border-right: 1px solid #2f6680;
}

.task:first-child {
border-left: 1px solid #2f6680;
}

.running {
background-color: #78d0f0;
}

.medium {
width: 71px;
}

.stacked {
width: 68px;
border-right: 4px double #2f6680;
background-color: #78d0f0;
}

.task svg {
width: 34px;
height: 34px;
}

.book {
padding-bottom: 3px;
}

.tray {
display: flex;
align-items: center;
gap: 8px;
margin-left: auto;
padding-right: 25px;
}

.tray svg {
width: 18px;
height: 18px;
}

.tray .tray_arrow {
width: 8px;
height: 5px;
margin-right: 6px;
}
```
